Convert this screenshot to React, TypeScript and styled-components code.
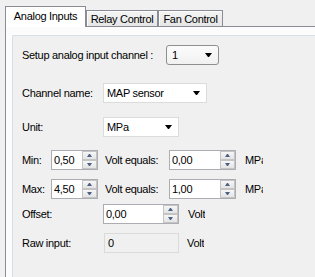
import styled, { createGlobalStyle } from "styled-components";

const GlobalStyle = createGlobalStyle`
    html, body {
        margin: 0;
        padding: 0;
        overflow: hidden;
        background: #f0f0f0;
    }
    body {
        font-family: "Liberation Sans", Arial, sans-serif;
        font-size: 11px;
        letter-spacing: -0.3px;
        color: #000;
    }
`;

const Window = styled.div`
    width: 315px;
    height: 277px;
    padding: 6px 0 0 5px;
    box-sizing: border-box;
    overflow: hidden;
`;

const TabStrip = styled.div`
    display: flex;
    align-items: flex-end;
    height: 20px;
    position: relative;
    z-index: 1;
`;

const Tab = styled.div<{ $active?: boolean; $w: number }>`
    width: ${(p) => p.$w}px;
    height: ${(p) => (p.$active ? 21 : 16)}px;
    margin-bottom: ${(p) => (p.$active ? -1 : 0)}px;
    box-sizing: border-box;
    border: 1px solid #898c95;
    border-bottom: none;
    background: ${(p) =>
        p.$active ? "#ffffff" : "linear-gradient(#f4f4f4, #e6e6e6)"};
    box-shadow: ${(p) => (p.$active ? "none" : "inset 1px 1px 0 #fcfcfc")};
    display: flex;
    align-items: center;
    justify-content: center;
    padding-bottom: ${(p) => (p.$active ? 2 : 0)}px;
    white-space: nowrap;
`;

const Page = styled.div`
    border-top: 1px solid #898c95;
    border-left: 1px solid #898c95;
    background: #fcfcfc;
    padding: 8px 0 0 6px;
    height: 300px;
`;

const Inner = styled.div`
    border-top: 1px solid #d5dfe5;
    border-left: 1px solid #d5dfe5;
    border-top-left-radius: 2px;
    background: #f0f0f0;
    height: 300px;
    padding: 9px 0 0 9px;
    box-sizing: border-box;
`;

const Row = styled.div<{ $top?: number }>`
    display: flex;
    align-items: center;
    height: 20px;
    margin-top: ${(p) => p.$top ?? 0}px;
`;

const Label = styled.span<{ $w: number }>`
    width: ${(p) => p.$w}px;
    flex: none;
    white-space: nowrap;
`;

const UnitLabel = styled.span<{ $ml: number; $w?: number }>`
    margin-left: ${(p) => p.$ml}px;
    width: ${(p) => (p.$w ? `${p.$w}px` : "auto")};
    overflow: hidden;
    white-space: nowrap;
    flex: none;
`;

const Combo = styled.div<{ $w: number; $styled?: boolean }>`
    width: ${(p) => p.$w}px;
    height: 20px;
    box-sizing: border-box;
    flex: none;
    display: flex;
    align-items: center;
    justify-content: space-between;
    padding: 0 6px 0 ${(p) => (p.$styled ? 5 : 3)}px;
    border: 1px solid ${(p) => (p.$styled ? "#8e8f8f" : "#dcdcdc")};
    border-radius: ${(p) => (p.$styled ? 3 : 0)}px;
    background: ${(p) => (p.$styled ? "linear-gradient(#fbfbfb, #f1f1f1)" : "#ffffff")};
`;

const ComboArrow = styled.span`
    width: 1px;
    height: 0;
    border-left: 3px solid transparent;
    border-right: 3px solid transparent;
    border-top: 4px solid #000;
`;

const Spin = styled.div<{ $w: number }>`
    width: ${(p) => p.$w}px;
    height: 20px;
    box-sizing: border-box;
    flex: none;
    display: flex;
    border: 1px solid #abadb3;
    background: #fff;
`;

const SpinText = styled.span`
    flex: 1;
    padding-left: 2px;
    display: flex;
    align-items: center;
`;

const SpinButtons = styled.div`
    width: 15px;
    display: flex;
    flex-direction: column;
`;

const SpinButton = styled.div`
    flex: 1;
    border: 1px solid #c4c4c4;
    background: linear-gradient(#f6f6f6, #e4e4e4);
    display: flex;
    align-items: center;
    justify-content: center;
`;

const SpinArrow = styled.span<{ $down?: boolean }>`
    width: 1px;
    height: 0;
    border-left: 2px solid transparent;
    border-right: 2px solid transparent;
    ${(p) =>
        p.$down ? "border-top: 3px solid #4d6185;" : "border-bottom: 3px solid #4d6185;"}
`;

const ReadOnlyBox = styled.div<{ $w: number }>`
    width: ${(p) => p.$w}px;
    height: 20px;
    box-sizing: border-box;
    flex: none;
    border: 1px solid #dadada;
    background: #f0f0f0;
    padding-left: 3px;
    display: flex;
    align-items: center;
`;

function Spinner({ w, value }: { w: number; value: string }) {
    return (
        <Spin $w={w}>
            <SpinText>{value}</SpinText>
            <SpinButtons>
                <SpinButton><SpinArrow /></SpinButton>
                <SpinButton><SpinArrow $down /></SpinButton>
            </SpinButtons>
        </Spin>
    );
}

const ranges = [
    { label: "Min:", volt: "0,50", value: "0,00", top: 13 },
    { label: "Max:", volt: "4,50", value: "1,00", top: 9 },
];

export default function App() {
    return (
        <>
            <GlobalStyle />
            <Window>
                <TabStrip>
                    <Tab $active $w={81}>Analog Inputs</Tab>
                    <Tab $w={72}>Relay Control</Tab>
                    <Tab $w={65}>Fan Control</Tab>
                </TabStrip>
                <Page>
                    <Inner>
                        <Row>
                            <Label $w={144}>Setup analog input channel :</Label>
                            <Combo $w={53} $styled>
                                <span>1</span>
                                <ComboArrow />
                            </Combo>
                        </Row>
                        <Row $top={18}>
                            <Label $w={81}>Channel name:</Label>
                            <Combo $w={104}>
                                <span>MAP sensor</span>
                                <ComboArrow />
                            </Combo>
                        </Row>
                        <Row $top={14}>
                            <Label $w={81}>Unit:</Label>
                            <Combo $w={76}>
                                <span>MPa</span>
                                <ComboArrow />
                            </Combo>
                        </Row>
                        {ranges.map((r) => (
                            <Row $top={r.top} key={r.label}>
                                <Label $w={29}>{r.label}</Label>
                                <Spinner w={47} value={r.volt} />
                                <UnitLabel $ml={7} $w={64}>Volt equals:</UnitLabel>
                                <Spinner w={67} value={r.value} />
                                <UnitLabel $ml={9} $w={18}>MPa</UnitLabel>
                            </Row>
                        ))}
                        <Row $top={5}>
                            <Label $w={81}>Offset:</Label>
                            <Spinner w={76} value="0,00" />
                            <UnitLabel $ml={9}>Volt</UnitLabel>
                        </Row>
                        <Row $top={9}>
                            <Label $w={82}>Raw input:</Label>
                            <ReadOnlyBox $w={75}>0</ReadOnlyBox>
                            <UnitLabel $ml={8}>Volt</UnitLabel>
                        </Row>
                    </Inner>
                </Page>
            </Window>
        </>
    );
}
